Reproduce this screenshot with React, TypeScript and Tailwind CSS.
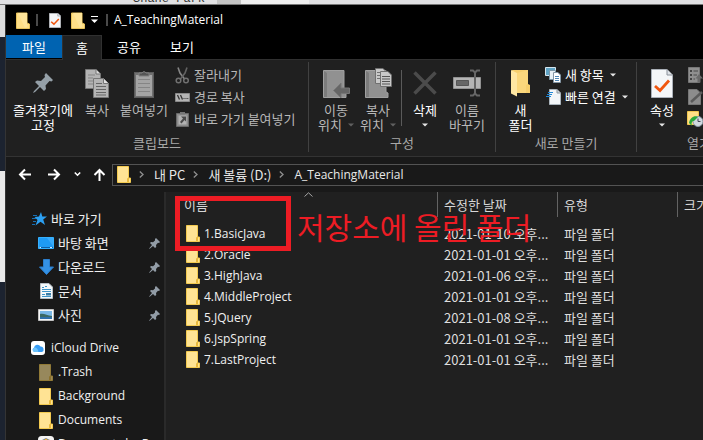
import type { ReactNode } from "react";

const KR = "font-['Noto_Sans_CJK_KR',sans-serif] text-[13px]";
const LATIN = "font-['Open_Sans','Noto_Sans_CJK_KR',sans-serif] text-[12px]";

function FolderIcon({ dim = false }: { dim?: boolean }) {
  return (
    <svg width="14" height="17" viewBox="0 0 14 17" className={dim ? "shrink-0 opacity-55" : "shrink-0"}>
      <path d="M.5 .5H11.5V12H13.5V16.5H.5Z" fill="#ffe394" stroke="#f3ca50" />
      <path d="M10.5 16V12.5L11.5 11.5V16" fill="#ffe9a8" stroke="#e9b93c" />
    </svg>
  );
}

function QuickFolder() {
  return (
    <svg width="14" height="17" viewBox="0 0 14 17" className="shrink-0">
      <path d="M.5 1H11V11L13.5 12V16.5H.5Z" fill="#ffdf87" stroke="#e8c25b" />
      <path d="M2 1H11V15L9 16" fill="#ffe59a" />
    </svg>
  );
}

function CheckPage({ w, h }: { w: number; h: number }) {
  return (
    <svg width={w} height={h} viewBox="0 0 22 29" preserveAspectRatio="none" className="shrink-0">
      <path d="M.5 .5H16L21.5 6V28.5H.5Z" fill="#f4f6f8" stroke="#aab0b8" />
      <path d="M16 .5V6H21.5" fill="#dfe3e8" stroke="#8a9099" />
      <path d="M4 17L9 21.5L18 11.5" fill="none" stroke="#f0560f" strokeWidth="2.8" />
    </svg>
  );
}

function PinBig() {
  return (
    <svg width="22" height="22" viewBox="0 0 22 22">
      <path d="M14 1L21 8L19.500 9.500L17.500 9L13.500 13.500L14 17L12 19L8 15L3 20L1 21L2 19L7 14L3 10L5 8.500L9 9L13 5L12.500 3Z" fill="#95a0a8" />
    </svg>
  );
}

function PinSmall() {
  return (
    <svg width="11" height="11" viewBox="0 0 22 22" className="shrink-0">
      <path d="M14 0L22 8L20 10L18 9.500L14 14L14.500 18L12 20L8 16L2 21L0 22L1 20L6 14L2 10L4 8L8 8.500L12 5L12 2Z" fill="#929ca6" />
    </svg>
  );
}

function GrayDocs() {
  return (
    <svg width="24" height="29" viewBox="0 0 24 29">
      <g stroke="#777" fill="#b4b4b4">
        <path d="M.5 .5H11L15.500 5V19.500H.5Z" />
        <path d="M11 .5V5H15.500" fill="#ddd" />
        <path d="M3 6H10M3 9H8M3 12H8M3 15H8" stroke="#858585" />
        <path d="M8.500 9.500H18.500L23.500 14.500V28.500H8.500Z" />
        <path d="M18.500 9.500V14.500H23.500" fill="#e0e0e0" />
        <path d="M11 14.500H17M11 17.500H21M11 20.500H21M11 23.500H21M11 26H21" stroke="#666" />
      </g>
    </svg>
  );
}

function GrayClipboard() {
  return (
    <svg width="20" height="29" viewBox="0 0 20 29">
      <rect x=".5" y="3.500" width="19" height="25" fill="#707070" stroke="#5c5c5c" />
      <rect x="2" y="6" width="16" height="21" fill="#a4a4a4" />
      <path d="M4 10.500H16M4 14.500H16M4 18.500H16M4 22.500H16" stroke="#858585" />
      <path d="M5 7V4H8A2.200 2.200 0 0 1 12 4H15V7Z" fill="#555" stroke="#808080" />
    </svg>
  );
}

function GrayFolder({ children }: { children: ReactNode }) {
  return (
    <svg width="27" height="30" viewBox="0 0 27 30">
      <path d="M.5 2.500H21V24L23 25V29.500H.5Z" fill="#919191" stroke="#a0a0a0" />
      <path d="M1 29V3L4 5V29Z" fill="#7c7c7c" />
      {children}
    </svg>
  );
}

function MoveIcon() {
  return (
    <GrayFolder>
      <path d="M10.500 22.500L18 15V20H26.500V25.500H18V30Z" fill="#666" stroke="#777" />
    </GrayFolder>
  );
}

function CopyToIcon() {
  return (
    <GrayFolder>
      <g stroke="#707070" fill="#c8c8c8">
        <path d="M10.500 .5H18L20.500 3V15.500H10.500Z" />
        <path d="M12 4.500H16M12 7.500H16M12 10.500H16" />
        <path d="M15.500 3.500H23L26.500 7V18.500H15.500Z" />
        <path d="M17 8.500H25M17 11H25M17 13.500H25M17 16H25" stroke="#555" />
      </g>
    </GrayFolder>
  );
}

function DeleteIcon() {
  return (
    <svg width="24" height="24" viewBox="0 0 24 24">
      <path d="M1.500 1.500L22.500 22.500M22.500 1.500L1.500 22.500" stroke="#4b4b4b" strokeWidth="3.500" />
    </svg>
  );
}

function RenameIcon() {
  return (
    <svg width="28" height="28" viewBox="0 0 28 28">
      <path d="M.5 8.500H27.500V19.500H.5Z" fill="#b5b5b5" stroke="#929292" />
      <path d="M3.500 11.500H15.500V16.500H3.500Z" fill="#666" stroke="#555" />
      <path d="M17 1.500H20L22 3.500L24 1.500H27M22 3V25M17 26.500H20L22 24.500L24 26.500H27" stroke="#666" strokeWidth="2" fill="none" />
    </svg>
  );
}

function NewFolderIcon() {
  return (
    <svg width="19" height="28" viewBox="0 0 19 28">
      <path d="M1 1H17V15L19 16V24H6Z" fill="#f7cf6d" />
      <path d="M0 1L6 4V27.500L0 24.500Z" fill="#ffe7a3" />
      <path d="M6 4L17 1V15L15 16V24H6Z" fill="#fbd77c" />
    </svg>
  );
}

function ScissorsIcon() {
  return (
    <svg width="15" height="17" viewBox="0 0 15 17" fill="none">
      <path d="M3 .5L5 6L9.500 12" stroke="#858585" strokeWidth="1.600" />
      <path d="M12 .5L10 6L5.500 12" stroke="#626262" strokeWidth="1.600" />
      <circle cx="3.500" cy="13.500" r="2.300" stroke="#707070" strokeWidth="1.500" />
      <circle cx="11" cy="13.500" r="2.300" stroke="#707070" strokeWidth="1.500" />
    </svg>
  );
}

function PathIcon() {
  return (
    <svg width="15" height="9" viewBox="0 0 15 9" className="shrink-0">
      <path d="M.5 .5H14.500V8.500H.5Z" fill="#b4b4b4" stroke="#8a8a8a" />
      <path d="M2.500 2L4.500 6.500M5.500 2L7.500 6.500" stroke="#333" strokeWidth="1.300" />
      <path d="M8.500 5.500H9.500M10.500 5.500H11.500M12.300 5.500H13.300" stroke="#333" />
    </svg>
  );
}

function ShortcutIcon() {
  return (
    <svg width="13" height="16" viewBox="0 0 13 16">
      <path d="M.5 2.500H12.500V15.500H.5Z" fill="#8c8c8c" stroke="#6a6a6a" />
      <path d="M2.500 4.500H10.500V13.500H2.500Z" fill="#b2b2b2" />
      <path d="M4 1H9V3.500H4Z" fill="#777" />
      <path d="M5 5.500H10V10.500L8.500 9L5.500 12.500L4 11L7 7.500Z" fill="#4a4a4a" />
    </svg>
  );
}

function NewItemIcon() {
  return (
    <svg width="16" height="16" viewBox="0 0 16 16">
      <path d="M.5 .5H10.500V8.500H.5Z" fill="#5fa3c4" stroke="#d5e6ef" />
      <path d="M4.500 3.500H10.500V12.500H4.500Z" fill="#e8f0f5" stroke="#7d99aa" />
      <path d="M8.500 5.500H13L15.500 8V15.500H8.500Z" fill="#fff" stroke="#8496a5" />
      <path d="M10 9.500H14M10 11.500H14M10 13.500H14" stroke="#4f87b5" />
    </svg>
  );
}

function EasyAccessIcon() {
  return (
    <svg width="15" height="16" viewBox="0 0 15 16">
      <path d="M3.500 .5H11L14.500 4V15.500H3.500Z" fill="#f2f5f7" stroke="#aab4bc" />
      <path d="M11 .5V4H14.500" fill="#cfd6dc" stroke="#8c979f" />
      <path d="M2 3.500H7M1 5.500H6M0 7.500H5" stroke="#2188d6" strokeWidth="1.200" />
    </svg>
  );
}

function OpenIcon() {
  return (
    <svg width="15" height="16" viewBox="0 0 15 16">
      <path d="M.5 .5H11.500V15.500H.5Z" fill="#8f8f8f" stroke="#777" />
      <path d="M2 3H4V5H2ZM2 7H4V9H2ZM2 11H4V13H2Z" fill="#444" />
      <path d="M5.500 4H10M5.500 8H9M5.500 12H7" stroke="#4a4a4a" />
      <path d="M11 7L15 11.500H12.500V15.500H9.500V11.500H7.500Z" fill="#6a6a6a" />
    </svg>
  );
}

function EditIcon() {
  return (
    <svg width="15" height="16" viewBox="0 0 15 16">
      <path d="M.5 .5H9L12.500 4V15.500H.5Z" fill="#8c8c8c" stroke="#777" />
      <path d="M3 13L14 3" stroke="#5a5a5a" strokeWidth="2.500" />
    </svg>
  );
}

function HistoryIcon() {
  return (
    <svg width="16" height="17" viewBox="0 0 16 17">
      <path d="M.5 .5H11.500V13.500H.5Z" fill="#ffdf87" stroke="#f0c64f" />
      <circle cx="11" cy="10.500" r="5" fill="#cfd8df" stroke="#8a98a4" />
      <path d="M11 7.500V10.500H13.500" stroke="#445" fill="none" />
      <path d="M2 12C3 6 8 4 11 6L7 10C5 10 4 12 5 15Z" fill="#2aa83a" />
    </svg>
  );
}

function Caret({ color = "#e6e6e6" }: { color?: string }) {
  return (
    <svg width="6" height="4" viewBox="0 0 6 4" className="shrink-0">
      <path d="M0 .5H6L3 3.500Z" fill={color} />
    </svg>
  );
}

function StarIcon() {
  return (
    <svg width="15" height="14" viewBox="0 0 15 14" className="shrink-0">
      <path d="M9 0L10.300 4.500H15L11.200 7.500L13 13L8.500 9.800L3.500 13.500L5.500 8L2.500 5L7 4.600Z" fill="#2ca0f2" />
      <path d="M1 3.500H5M0 6.500H4M1 9.500H4M0 12.500H3" stroke="#1770b4" />
    </svg>
  );
}

function DesktopIcon() {
  return (
    <svg width="16" height="12" viewBox="0 0 16 12">
      <path d="M.5 .5H15.500V11.500H.5Z" fill="#1e9bf5" stroke="#35b1ff" />
      <path d="M9 1H15V9Z" fill="#38abfb" />
      <path d="M1 10.500H15" stroke="#0b5fa8" />
      <path d="M1.500 10.500H3M12 10.500H14" stroke="#cfeaff" />
    </svg>
  );
}

function DownloadIcon() {
  return (
    <svg width="15" height="16" viewBox="0 0 15 16">
      <path d="M4.500 .5H10.500V8H14.500L7.500 15.500L.5 8H4.500Z" fill="#3492e6" stroke="#2a7fce" />
    </svg>
  );
}

function DocumentIcon() {
  return (
    <svg width="13" height="16" viewBox="0 0 13 16">
      <path d="M.5 .5H9L12.500 4V15.500H.5Z" fill="#f5f8fa" stroke="#b6bfc6" />
      <path d="M2 4.500H4M5 3.500H7M2 6.500H11M2 8.500H11M2 11.500H5M2 13.500H11" stroke="#3d94c9" />
      <path d="M6 10H11V12.500H6Z" fill="#3b7ea8" />
    </svg>
  );
}

function PictureIcon() {
  return (
    <svg width="16" height="12" viewBox="0 0 16 12">
      <path d="M.5 .5H15.500V11.500H.5Z" fill="#f7f7f7" stroke="#c2c2c2" />
      <path d="M2 2H14V10H2Z" fill="#7ab8e6" />
      <path d="M2 5C6 4 9 7 14 7V10H2Z" fill="#3c6a64" />
      <path d="M2 8H14V10H2Z" fill="#2f6fa8" />
    </svg>
  );
}

function CloudIcon() {
  return (
    <svg width="14" height="14" viewBox="0 0 14 14" className="shrink-0">
      <rect width="14" height="14" rx="3" fill="#fff" />
      <path d="M3.500 11A2.200 2.200 0 0 1 3 6.800A3.500 3.500 0 0 1 9.500 5.500A2.900 2.900 0 0 1 11 11Z" fill="#379cf3" />
      <path d="M3.500 11A2.200 2.200 0 0 1 3 6.800C5 6 7 8 7.500 11Z" fill="#6cc2fa" />
    </svg>
  );
}

function AppIcon() {
  return (
    <svg width="16" height="16" viewBox="0 0 16 16">
      <rect width="16" height="16" rx="3.500" fill="#f3f3f3" />
      <path d="M4 4L8 2L12 4V12H4Z" fill="#8a8a8a" />
      <path d="M7 3H9V6H7Z" fill="#f2b632" />
    </svg>
  );
}

function ArrowIcon({ d, w = 13, sw = 2 }: { d: string; w?: number; sw?: number }) {
  return (
    <svg width={w} height="13" viewBox={`0 0 ${w} 13`} fill="none" stroke="#fff" strokeWidth={sw}>
      <path d={d} />
    </svg>
  );
}

function Crumb() {
  return (
    <svg width="5" height="7" viewBox="0 0 5 7" fill="none" className="ml-2 shrink-0">
      <path d="M.8 .5L4 3.500L.8 6.500" stroke="#8f8f8f" strokeWidth="1.300" />
    </svg>
  );
}

type BigProps = { icon: ReactNode; lines: string[]; width: string; active?: boolean; caret?: "own" | "inline" };

function BigButton({ icon, lines, width, active = false, caret }: BigProps) {
  return (
    <button type="button" className={`flex shrink-0 flex-col items-center pt-1 ${width} ${active ? "text-white" : "text-[#b8b8b8]"}`}>
      <span className="flex h-[34px] items-center justify-center">{icon}</span>
      <span className="mt-0.5 leading-[15px] whitespace-nowrap">
        {lines.map((line, i) => (
          <span key={line} className="flex items-center justify-center gap-1.5">
            {line}
            {caret === "inline" && i === lines.length - 1 && <Caret color="#606060" />}
          </span>
        ))}
      </span>
      {caret === "own" && (
        <span className="flex h-[15px] items-center">
          <Caret />
        </span>
      )}
    </button>
  );
}

function SmallButton({ icon, label, active = false, caret = false }: { icon: ReactNode; label: string; active?: boolean; caret?: boolean }) {
  return (
    <button type="button" className={`flex h-[22px] items-center gap-1 whitespace-nowrap ${active ? "text-white" : "text-[#b8b8b8]"}`}>
      <span className="flex w-4 justify-center">{icon}</span>
      {label}
      {caret && (
        <span className="ml-0.5">
          <Caret />
        </span>
      )}
    </button>
  );
}

function Group({ label, width, children }: { label: string; width: string; children: ReactNode }) {
  return (
    <section className={`flex shrink-0 flex-col border-r border-[#414141] ${width}`} aria-label={label}>
      <div className="flex h-[73px] items-start">{children}</div>
      <div className="text-center leading-[18px] whitespace-nowrap text-[#a8a8a8]">{label}</div>
    </section>
  );
}

const quickLinks = [
  { label: "바탕 화면", icon: <DesktopIcon /> },
  { label: "다운로드", icon: <DownloadIcon /> },
  { label: "문서", icon: <DocumentIcon /> },
  { label: "사진", icon: <PictureIcon /> },
];

const cloudFolders = [
  { label: ".Trash", icon: <FolderIcon dim /> },
  { label: "Background", icon: <FolderIcon /> },
  { label: "Documents", icon: <FolderIcon /> },
  { label: "Documents by R...", icon: <AppIcon /> },
];

const files = [
  ["1.BasicJava", "2021-01-10 오후..."],
  ["2.Oracle", "2021-01-01 오후..."],
  ["3.HighJava", "2021-01-06 오후..."],
  ["4.MiddleProject", "2021-01-01 오후..."],
  ["5.JQuery", "2021-01-08 오후..."],
  ["6.JspSpring", "2021-01-01 오후..."],
  ["7.LastProject", "2021-01-01 오후..."],
];

function TitleBar() {
  return (
    <header className="flex h-[30px] items-center bg-black pl-2.5">
      <QuickFolder />
      <span className="ml-1.5 h-3 w-0.5 bg-[#4a4a4a]" />
      <button type="button" aria-label="속성" className="ml-[11px]">
        <CheckPage w={12} h={15} />
      </button>
      <button type="button" aria-label="새 폴더" className="ml-2.5">
        <QuickFolder />
      </button>
      <button type="button" aria-label="빠른 실행 도구 모음" className="ml-1.5">
        <svg width="7" height="8" viewBox="0 0 7 8">
          <path d="M0 .5H7" stroke="#fff" />
          <path d="M0 3.500H7L3.500 7Z" fill="#fff" />
        </svg>
      </button>
      <span className="ml-2 h-3 w-0.5 bg-[#4a4a4a]" />
      <h1 className={`ml-1.5 text-white ${LATIN}`}>A_TeachingMaterial</h1>
    </header>
  );
}

function Tabs() {
  return (
    <nav className="flex h-[25px] border-b border-[#303030] bg-black text-white">
      <button type="button" className="h-[23px] w-14 bg-[#0063b1]">파일</button>
      <button type="button" className="-mb-px w-10 border-x border-t border-[#303030] bg-[#202020]">홈</button>
      <button type="button" className="h-[23px] w-[54px]">공유</button>
      <button type="button" className="h-[23px] w-[52px]">보기</button>
    </nav>
  );
}

function Ribbon() {
  return (
    <div className="flex h-[97px] overflow-hidden border-b border-[#333] bg-[#202020] pt-0.5 pb-1">
      <Group label="클립보드" width="w-[303px]">
        <BigButton icon={<PinBig />} lines={["즐겨찾기에", "고정"]} width="w-[74px]" active />
        <BigButton icon={<GrayDocs />} lines={["복사"]} width="w-[34px]" />
        <BigButton icon={<GrayClipboard />} lines={["붙여넣기"]} width="w-[60px]" />
        <div className="pt-0.5">
          <SmallButton icon={<ScissorsIcon />} label="잘라내기" />
          <SmallButton icon={<PathIcon />} label="경로 복사" />
          <SmallButton icon={<ShortcutIcon />} label="바로 가기 붙여넣기" />
        </div>
      </Group>
      <Group label="구성" width="w-[187px]">
        <div className="flex pl-1.5">
          <BigButton icon={<MoveIcon />} lines={["이동", "위치"]} width="w-[42px]" caret="inline" />
          <BigButton icon={<CopyToIcon />} lines={["복사", "위치"]} width="w-[42px]" caret="inline" />
          <span className="mt-2 ml-0.5 h-14 w-px bg-[#5a5a5a]" />
          <BigButton icon={<DeleteIcon />} lines={["삭제"]} width="w-[46px]" active caret="own" />
          <BigButton icon={<RenameIcon />} lines={["이름", "바꾸기"]} width="w-[38px]" />
        </div>
      </Group>
      <Group label="새로 만들기" width="w-[141px]">
        <BigButton icon={<NewFolderIcon />} lines={["새", "폴더"]} width="w-[49px]" active />
        <div className="pt-0.5">
          <SmallButton icon={<NewItemIcon />} label="새 항목" active caret />
          <SmallButton icon={<EasyAccessIcon />} label="빠른 연결" active caret />
        </div>
      </Group>
      <Group label="열기" width="w-[125px]">
        <BigButton icon={<CheckPage w={22} h={29} />} lines={["속성"]} width="w-[50px]" active caret="own" />
        <div className="pt-0.5">
          <SmallButton icon={<OpenIcon />} label="열기" />
          <SmallButton icon={<EditIcon />} label="편집" />
          <SmallButton icon={<HistoryIcon />} label="히스토리" active />
        </div>
      </Group>
    </div>
  );
}

function AddressBar() {
  return (
    <div className="flex h-[35px] items-center bg-[#191919]">
      <div className="flex w-[106px] items-center pl-3">
        <button type="button" aria-label="뒤로"><ArrowIcon d="M13 6.500H2M7 1.500L2 6.500L7 11.500" /></button>
        <button type="button" aria-label="앞으로" className="ml-[17px]"><ArrowIcon d="M0 6.500H11M6 1.500L11 6.500L6 11.500" /></button>
        <button type="button" aria-label="최근 위치" className="ml-[13px]"><ArrowIcon w={7} sw={1.6} d="M.8 4.500L3.500 7.200L6.200 4.500" /></button>
        <button type="button" aria-label="위로" className="ml-3"><ArrowIcon d="M6.500 13V2M1.500 7L6.500 2L11.500 7" /></button>
      </div>
      <div className="flex h-[22px] min-w-0 flex-1 items-center overflow-hidden border-y border-l border-[#535353] pl-1 whitespace-nowrap text-[#e8e8e8]">
        <FolderIcon />
        <Crumb />
        <button type="button" className="ml-2.5">내 PC</button>
        <Crumb />
        <button type="button" className="ml-2.5">새 볼륨 (D:)</button>
        <Crumb />
        <button type="button" className={`ml-2.5 ${LATIN}`}>A_TeachingMaterial</button>
      </div>
    </div>
  );
}

function Sidebar() {
  return (
    <aside className="w-[158px] shrink-0 overflow-hidden pt-[15px] whitespace-nowrap text-[#f0f0f0]">
      <a href="#quick" className="flex h-6 items-center gap-1 pl-[26px]">
        <StarIcon />
        바로 가기
      </a>
      <ul>
        {quickLinks.map((item) => (
          <li key={item.label}>
            <a href="#quick" className="flex h-6 items-center gap-1 pr-1 pl-8">
              <span className="flex w-4 justify-center">{item.icon}</span>
              <span className="flex-1">{item.label}</span>
              <PinSmall />
            </a>
          </li>
        ))}
      </ul>
      <a href="#icloud" className={`mt-[9px] flex h-6 items-center gap-1.5 pl-[25px] ${LATIN}`}>
        <CloudIcon />
        iCloud Drive
      </a>
      <ul className={LATIN}>
        {cloudFolders.map((item) => (
          <li key={item.label}>
            <a href="#icloud" className="flex h-6 items-center gap-1 pl-8">
              <span className="flex w-4 justify-center">{item.icon}</span>
              {item.label}
            </a>
          </li>
        ))}
      </ul>
    </aside>
  );
}

function FileList() {
  return (
    <main className="relative min-w-0 flex-1 overflow-hidden border-l-2 border-[#2a2a2a] bg-[#202020]">
      <table className="w-full table-fixed border-collapse text-left whitespace-nowrap">
        <colgroup>
          <col className="w-[272px]" />
          <col className="w-[120px]" />
          <col className="w-[120px]" />
          <col />
        </colgroup>
        <thead>
          <tr className="text-[#d6d6d6]">
            {["이름", "수정한 날짜", "유형", "크기"].map((name, i) => (
              <th key={name} className="overflow-hidden p-0 pb-1.5 font-normal">
                <div className={`flex h-[25px] items-center ${i === 0 ? "pl-[18px]" : "pl-1.5"} ${i < 3 ? "border-r border-[#636363]" : ""}`}>{name}</div>
              </th>
            ))}
          </tr>
        </thead>
        <tbody className="text-[#dedede]">
          {files.map(([name, date]) => (
            <tr key={name} className="h-[21px]">
              <td className="p-0">
                <div className={`flex h-[21px] items-center gap-1 pl-5 text-[#f0f0f0] ${LATIN}`}>
                  <FolderIcon />
                  {name}
                </div>
              </td>
              <td className="overflow-hidden py-0 pr-0 pl-1.5 leading-[21px]">{date}</td>
              <td className="overflow-hidden py-0 pr-0 pl-1.5 leading-[21px]">파일 폴더</td>
              <td className="p-0" />
            </tr>
          ))}
        </tbody>
      </table>
      <svg width="9" height="5" viewBox="0 0 9 5" fill="none" className="absolute top-0 left-[138px]">
        <path d="M.5 4.500L4.500 .8L8.500 4.500" stroke="#a5a5a5" />
      </svg>
      <div className="absolute top-1 left-[9px] h-[55px] w-[116px] border-[5px] border-[#ed1c24]" />
      <p className="absolute top-[18px] left-[131px] text-[30px] leading-[32px] whitespace-nowrap text-[#ed1c24]">저장소에 올린 폴더</p>
    </main>
  );
}

export default function App() {
  return (
    <div className={`flex h-screen flex-col overflow-hidden bg-[#1c2330] leading-[18px] ${KR}`}>
      <div className="flex h-[5px] shrink-0 items-end overflow-hidden border-b border-[#777] bg-[#e1e1e3] pl-[133px]">
        <span className="font-['Liberation_Mono',monospace] text-[12px] leading-[10px] text-[#333]">Shane Park</span>
        <span className="ml-3 h-full w-6 bg-[#c4c4c4]" />
        <span className="h-full w-[68px] bg-[#efefef]" />
      </div>
      <div className="flex min-h-0 flex-1">
        <div className="flex w-[5px] shrink-0 flex-col">
          <div className="h-8 bg-[#dcdcdc]" />
          <div className="h-[134px]" />
          <div className="h-[111px] bg-[#e9e9e9]" />
        </div>
        <div className="flex min-w-0 flex-1 flex-col border-l border-[#343434] bg-[#191919]">
          <TitleBar />
          <Tabs />
          <Ribbon />
          <AddressBar />
          <div className="flex min-h-0 flex-1">
            <Sidebar />
            <FileList />
          </div>
        </div>
      </div>
    </div>
  );
}
